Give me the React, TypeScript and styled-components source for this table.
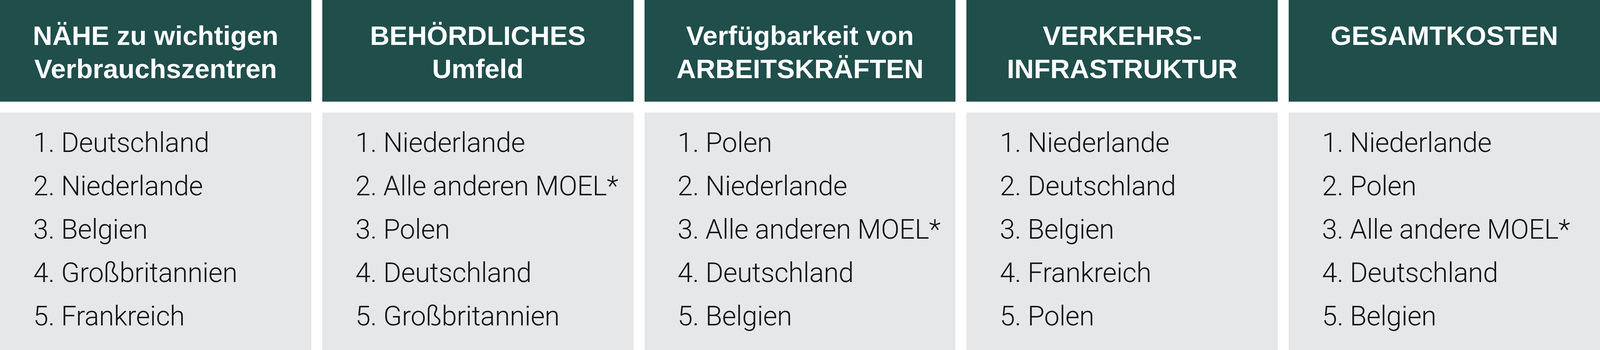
import React from "react";
import styled, { createGlobalStyle } from "styled-components";

const GlobalStyle = createGlobalStyle`
  html, body {
    margin: 0;
    padding: 0;
    background: #ffffff;
  }
  #root {
    width: 100%;
  }
`;

const Board = styled.div`
  display: grid;
  grid-template-columns: repeat(5, minmax(0, 1fr));
  column-gap: 28px;
  width: 100%;
  height: 896px;
  overflow: hidden;
`;

const Column = styled.section`
  display: grid;
  grid-template-rows: 261px 1fr;
  row-gap: 27px;
  min-width: 0;
`;

const Header = styled.h2`
  margin: 0;
  background: #1f4e4b;
  border-bottom: 1px solid #c9d6d4;
  box-sizing: border-box;
  padding-top: 49px;
  color: #ffffff;
  font-family: "Liberation Sans", Arial, sans-serif;
  font-weight: 700;
  font-size: 69px;
  line-height: 85px;
  text-align: center;
`;

const Body = styled.ol`
  margin: 0;
  list-style: none;
  background: #e6e7e9;
  padding: 22px 0 0 85px;
  color: #111111;
  font-family: Roboto, "Liberation Sans", sans-serif;
  font-weight: 300;
  font-size: 70px;
  letter-spacing: -0.4px;
  line-height: 111px;
  overflow: hidden;
`;

const Item = styled.li`
  white-space: nowrap;
`;

type ColumnData = { title: React.ReactNode; items: string[] };

const columns: ColumnData[] = [
  {
    title: (
      <>
        NÄHE zu wichtigen
        <br />
        Verbrauchszentren
      </>
    ),
    items: ["Deutschland", "Niederlande", "Belgien", "Großbritannien", "Frankreich"],
  },
  {
    title: (
      <>
        BEHÖRDLICHES
        <br />
        Umfeld
      </>
    ),
    items: ["Niederlande", "Alle anderen MOEL*", "Polen", "Deutschland", "Großbritannien"],
  },
  {
    title: (
      <>
        Verfügbarkeit von
        <br />
        ARBEITSKRÄFTEN
      </>
    ),
    items: ["Polen", "Niederlande", "Alle anderen MOEL*", "Deutschland", "Belgien"],
  },
  {
    title: (
      <>
        VERKEHRS-
        <br />
        INFRASTRUKTUR
      </>
    ),
    items: ["Niederlande", "Deutschland", "Belgien", "Frankreich", "Polen"],
  },
  {
    title: <>GESAMTKOSTEN</>,
    items: ["Niederlande", "Polen", "Alle andere MOEL*", "Deutschland", "Belgien"],
  },
];

export default function App() {
  return (
    <>
      <GlobalStyle />
      <Board>
        {columns.map((col, i) => (
          <Column key={i}>
            <Header>{col.title}</Header>
            <Body>
              {col.items.map((item, j) => (
                <Item key={j}>
                  {j + 1}. {item}
                </Item>
              ))}
            </Body>
          </Column>
        ))}
      </Board>
    </>
  );
}
